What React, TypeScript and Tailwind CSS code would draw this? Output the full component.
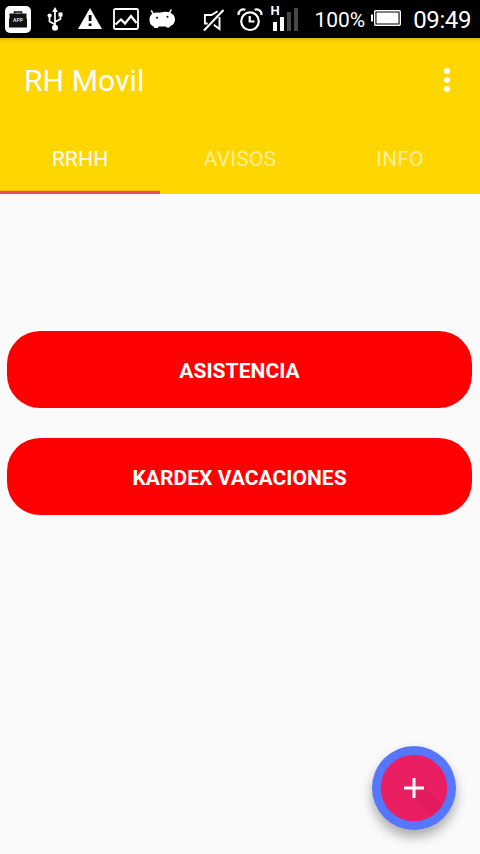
import * as React from 'react';
import { clsx } from 'clsx';

const tabs = ['RRHH', 'AVISOS', 'INFO'];
const actions = ['ASISTENCIA', 'KARDEX VACACIONES'];

function AppIcon() {
  return (
    <div className="relative flex h-[27px] w-[26px] items-center justify-center rounded-[5px] bg-white">
      <svg className="absolute inset-0" width="26" height="27" viewBox="0 0 26 27" fill="none">
        <path d="M9.500 7.500V6h7v1.500" stroke="#111" strokeWidth="1.500" />
        <path d="M4.500 7.500h17V12l.5 1v8.500H4V13l.5-1z" fill="#111" />
      </svg>
      <span className="relative mt-[3px] text-[5px] leading-none font-bold text-[#ddd]">APP</span>
    </div>
  );
}

function UsbIcon() {
  return (
    <svg className="ml-4" width="16" height="24" viewBox="0 0 16 24" fill="none">
      <path d="M8 20V4M8 17.500L2.500 14.500V9M8 15l5.500-3V8" stroke="white" strokeWidth="1.700" />
      <path d="M8 0l2.800 5H5.200z" fill="white" />
      <circle cx="2.600" cy="8.500" r="2.100" fill="white" />
      <path d="M11.500 5.500h4v4h-4z" fill="white" />
      <circle cx="8" cy="20.700" r="3" fill="white" />
    </svg>
  );
}

function WarningIcon() {
  return (
    <svg className="-mt-[2px] ml-[15px]" width="24" height="21" viewBox="0 0 24 21">
      <path d="M12 0l12 21H0z" fill="white" />
      <path d="M10.700 7h2.800v6h-2.800zM10.700 15.500h2.800V18h-2.800z" fill="black" />
    </svg>
  );
}

function PictureIcon() {
  return (
    <svg className="ml-[11px]" width="26" height="22" viewBox="0 0 26 22" fill="none" stroke="white">
      <rect x="1" y="1" width="24" height="20" rx="1.500" strokeWidth="1.800" />
      <path d="M2.500 16.500L8 11.500l4 4L18 8l5.500 7" strokeWidth="2.200" />
    </svg>
  );
}

function AndroidIcon() {
  return (
    <svg className="ml-[10px]" width="26" height="20" viewBox="0 0 26 20">
      <path d="M2.500 2l2.500 4M22 1l-2 4" stroke="white" strokeWidth="1.500" strokeLinecap="round" />
      <path d="M.5 10.500C.5 6 4 3 9 3.600c3 .3 4-.8 7.500-.8C22 2.800 26 6 26 10.500c0 3.500-2.500 6-5 6.700l-.5 1.300h-3l-.8-1H9.500L9 19H5.500L4.500 17.500C2 16.500.5 14.500.5 10.500z" fill="white" />
      <circle cx="8" cy="8.800" r="1" fill="black" />
      <circle cx="18.500" cy="7.700" r="1" fill="black" />
    </svg>
  );
}

function MuteIcon() {
  return (
    <svg className="mt-[2px]" width="22" height="23" viewBox="0 0 22 23" fill="none" stroke="white">
      <path d="M4.700 14.500H1.900V6h6.600L14.500 2.200M16.500 8v12L10.800 15.800" strokeWidth="1.900" />
      <path d="M1 21.500L20.500 1" strokeWidth="2.100" />
    </svg>
  );
}

function AlarmIcon() {
  return (
    <svg className="mt-px ml-3" width="26" height="24" viewBox="0 0 26 24" fill="none" stroke="white">
      <circle cx="13" cy="13.200" r="8.800" strokeWidth="2.200" />
      <path d="M12.700 8v5.500h4.800" strokeWidth="2.200" />
      <path d="M1.600 7A5 5 0 0 1 8.300 1.700M24.400 7A5 5 0 0 0 17.700 1.700" strokeWidth="2.200" />
    </svg>
  );
}

function SignalIcon() {
  return (
    <div className="relative -mt-[3px] ml-[7px] mr-px h-[27px] w-[28px]">
      <span className="absolute top-[1px] left-0 text-[13px] leading-[11px] font-bold text-white">H</span>
      <svg className="absolute inset-0" width="28" height="27" viewBox="0 0 28 27">
        <path d="M3 18h4v9H3zM10 13h4v14h-4z" fill="white" />
        <path d="M17 8h4v19h-4zM24 4h4v23h-4z" fill="#484848" />
      </svg>
    </div>
  );
}

function BatteryIcon() {
  return (
    <svg className="-mt-[2px] ml-[6px]" width="30" height="16" viewBox="0 0 30 16">
      <path d="M0 4.500h2v7H0z" fill="white" />
      <rect x="3.700" y="0.700" width="25.600" height="14.600" rx="1" fill="none" stroke="white" strokeWidth="1.400" />
      <path d="M5.500 2.500h22v11h-22z" fill="white" />
    </svg>
  );
}

function StatusBar() {
  return (
    <div className="flex h-[38px] items-center bg-black pr-[9px] pl-[5px] text-white">
      <AppIcon />
      <UsbIcon />
      <WarningIcon />
      <PictureIcon />
      <AndroidIcon />
      <div className="ml-auto flex items-center">
        <MuteIcon />
        <AlarmIcon />
        <SignalIcon />
        <span className="mt-[2px] ml-[15px] text-[21px] leading-none">100%</span>
        <BatteryIcon />
        <span className="mt-[2px] ml-3 text-[24px] leading-none tracking-[-0.4px]">09:49</span>
      </div>
    </div>
  );
}

export default function App() {
  const [active, setActive] = React.useState('RRHH');

  return (
    <div className="relative flex h-[854px] w-[480px] flex-col overflow-hidden bg-[#fafafa] font-[Roboto,sans-serif]">
      <StatusBar />

      <header className="flex h-[156px] flex-col bg-[#ffd600] bg-[linear-gradient(#d9b300,#f3ca00_2px,#ffd600_6px)] text-white">
        <div className="flex h-[84px] items-center justify-between pr-[30px] pl-6">
          <h1 className="text-[30px] leading-[31px] tracking-[0.1px]">RH Movil</h1>
          <button type="button" aria-label="Menu">
            <svg width="6" height="26" viewBox="0 0 6 26" fill="white">
              <circle cx="3" cy="4" r="3" />
              <circle cx="3" cy="13" r="3" />
              <circle cx="3" cy="22" r="3" />
            </svg>
          </button>
        </div>
        <nav className="grid h-[72px] grid-cols-3">
          {tabs.map((tab) => (
            <button
              key={tab}
              type="button"
              onClick={() => setActive(tab)}
              className={clsx(
                'border-b-[3px] pt-[5px] text-[21px] leading-none tracking-[0.2px]',
                active === tab
                  ? 'border-[#ee4a68] text-white shadow-[inset_0_-1px_#f9b90c]'
                  : 'border-transparent text-white/60'
              )}
            >
              {tab}
            </button>
          ))}
        </nav>
      </header>

      <main className="flex flex-col gap-[30px] pt-[137px] pr-2 pl-[7px]">
        {actions.map((label) => (
          <button
            key={label}
            type="button"
            className="h-[77px] rounded-[33px] bg-[#ff0000] pt-[4px] text-[21px] leading-none font-bold tracking-[0.05px] text-white"
          >
            {label}
          </button>
        ))}
      </main>

      <button
        type="button"
        aria-label="Add"
        className="absolute right-6 bottom-6 flex size-[84px] items-center justify-center rounded-full bg-[#5677fc] shadow-[0_7px_12px_rgba(0,0,0,0.32)]"
      >
        <svg width="68" height="68" viewBox="0 0 68 68">
          <circle cx="34" cy="34" r="33.300" fill="#e91e63" />
          <path d="M44 34L62 51A33 33 0 0 1 51 62L34 44z" fill="#e01b5e" />
          <path d="M34 24v20M24 34h20" stroke="white" strokeWidth="3" />
        </svg>
      </button>
    </div>
  );
}
